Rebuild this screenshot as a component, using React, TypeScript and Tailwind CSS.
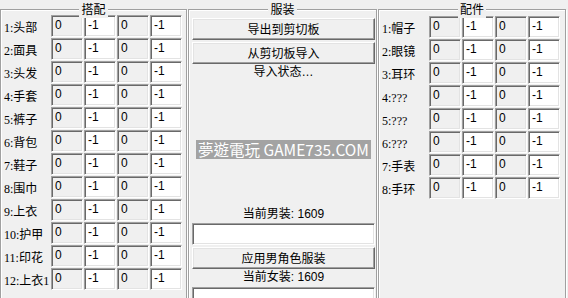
import React from "react";

const leftLabels = ["1:头部", "2:面具", "3:头发", "4:手套", "5:裤子", "6:背包", "7:鞋子", "8:围巾", "9:上衣", "10:护甲", "11:印花", "12:上衣1"];
const rightLabels = ["1:帽子", "2:眼镜", "3:耳环", "4:???", "5:???", "6:???", "7:手表", "8:手环"];

function Box({ value, gray }: { value: string; gray?: boolean }) {
  return (
    <div
      className={
        gray
          ? "w-[32px] h-[22px] shrink-0 border border-t-[#a0a0a0] border-l-[#a0a0a0] border-b-white border-r-white shadow-[inset_1px_1px_0_#696969,inset_-1px_-1px_0_#e3e3e3] bg-[#f0f0f0] pl-[3px] pt-[2px] text-[12px] leading-[14px] text-black font-['Liberation_Sans',sans-serif]"
          : "w-[32px] h-[22px] shrink-0 border border-t-[#a0a0a0] border-l-[#a0a0a0] border-b-white border-r-white shadow-[inset_1px_1px_0_#696969,inset_-1px_-1px_0_#e3e3e3] bg-white pl-[3px] pt-[2px] text-[12px] leading-[14px] text-black font-['Liberation_Sans',sans-serif]"
      }
    >
      {value}
    </div>
  );
}

function Row({ label }: { label: string }) {
  return (
    <div className="flex h-[22px]">
      <div className="w-[47px] shrink-0 whitespace-nowrap text-[12px] leading-[27px] text-black font-['Liberation_Serif','Noto_Sans_CJK_SC',serif]">
        {label}
      </div>
      <div className="flex gap-[1px]">
        <Box value="0" gray />
        <Box value="-1" />
        <Box value="0" gray />
        <Box value="-1" />
      </div>
    </div>
  );
}

function Title({ text }: { text: string }) {
  return (
    <div className="absolute left-0 right-[1px] top-0 flex justify-center">
      <span className="bg-[#f0f0f0] px-[2px] text-[12px] leading-[18px] text-black font-['Noto_Sans_CJK_SC',sans-serif]">
        {text}
      </span>
    </div>
  );
}

function Btn({ text }: { text: string }) {
  return (
    <div className="h-[22px] w-[183px] shrink-0 flex items-center justify-center border border-t-white border-l-white border-b-[#696969] border-r-[#696969] shadow-[inset_-1px_-1px_0_#a0a0a0,inset_1px_1px_0_#e3e3e3] bg-[#f0f0f0] text-[12px] leading-[14px] text-black font-['Noto_Sans_CJK_SC',sans-serif]">
      {text}
    </div>
  );
}

function TextBox() {
  return (
    <div className="h-[22px] w-[183px] shrink-0 border border-t-[#a0a0a0] border-l-[#a0a0a0] border-b-white border-r-white shadow-[inset_1px_1px_0_#696969,inset_-1px_-1px_0_#e3e3e3] bg-white" />
  );
}

function Caption({ text }: { text: string }) {
  return (
    <div className="h-[16px] w-[183px] text-center text-[12px] leading-[16px] text-black font-['Liberation_Sans','Noto_Sans_CJK_SC',sans-serif] whitespace-nowrap">
      {text}
    </div>
  );
}

export default function App() {
  return (
    <div className="w-[568px] h-[298px] bg-[#f0f0f0] flex overflow-hidden select-none">
      {/* Left group */}
      <div className="relative w-[188px] shrink-0 pt-[9px]">
        <div className="w-[187px] h-[300px] border border-[#a0a0a0] shadow-[inset_1px_1px_0_#fff,1px_1px_0_#fff] pl-[3px] pt-[5px] flex flex-col gap-[1px]">
          {leftLabels.map((l) => (
            <Row key={l} label={l} />
          ))}
        </div>
        <Title text="搭配" />
      </div>

      {/* Middle group */}
      <div className="relative w-[190px] shrink-0 pt-[9px]">
        <div className="w-[189px] h-[300px] border border-[#a0a0a0] shadow-[inset_1px_1px_0_#fff,1px_1px_0_#fff] pl-[3px] pt-[8px] flex flex-col">
          <Btn text="导出到剪切板" />
          <div className="mt-[2px]">
            <Btn text="从剪切板导入" />
          </div>
          <Caption text="导入状态…" />
          <div className="mt-[60px] w-[183px] flex justify-center">
            <div className="h-[19px] px-[2px] bg-[#a3a3a3] text-white text-[15.5px] leading-[19px] whitespace-nowrap font-['Noto_Sans_CJK_TC','Noto_Sans',sans-serif]">
              夢遊電玩 GAME735.COM
            </div>
          </div>
          <div className="mt-[47px]">
            <Caption text="当前男装: 1609" />
          </div>
          <div className="mt-[1px]">
            <TextBox />
          </div>
          <div className="mt-[2px]">
            <Btn text="应用男角色服装" />
          </div>
          <Caption text="当前女装: 1609" />
          <div className="mt-[2px]">
            <TextBox />
          </div>
        </div>
        <Title text="服装" />
      </div>

      {/* Right group */}
      <div className="relative w-[189px] shrink-0 pt-[9px]">
        <div className="w-[188px] h-[300px] border border-[#a0a0a0] shadow-[inset_1px_1px_0_#fff,1px_1px_0_#fff] pl-[3px] pt-[6px] flex flex-col gap-[1px]">
          {rightLabels.map((l) => (
            <Row key={l} label={l} />
          ))}
        </div>
        <Title text="配件" />
      </div>
    </div>
  );
}
